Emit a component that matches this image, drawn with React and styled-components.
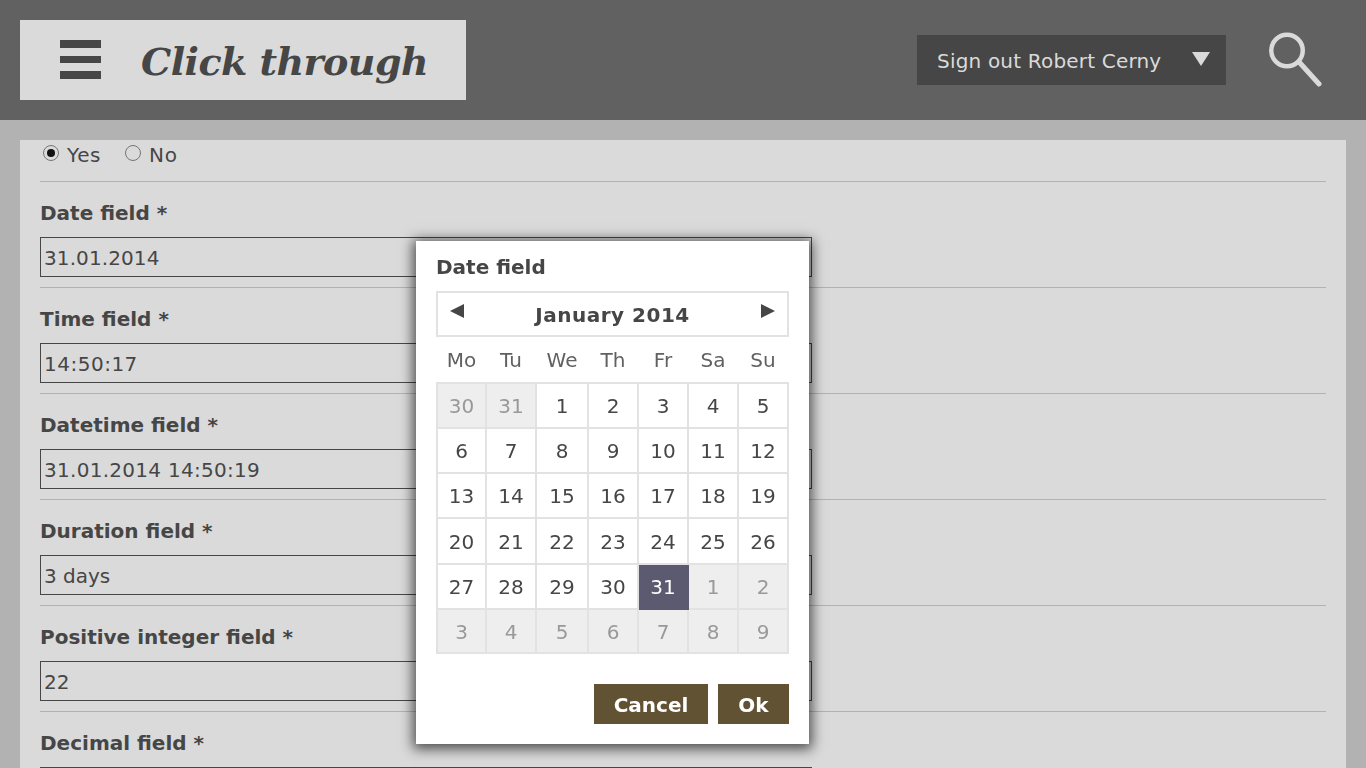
import React from "react";
import styled, { createGlobalStyle } from "styled-components";

const Global = createGlobalStyle`
  html, body { margin: 0; padding: 0; height: 100%; overflow: hidden; }
  body { background: #b2b2b2; font-family: "DejaVu Sans", Verdana, sans-serif; font-size: 20px; color: #464646; }
`;

const Header = styled.header`
  height: 120px; background: #616161; display: flex; align-items: center;
  padding: 0 44px 0 20px; box-sizing: border-box;
`;
const Brand = styled.div`
  width: 446px; height: 80px; background: #dadada; display: flex; align-items: center;
  padding-left: 40px; box-sizing: border-box; gap: 40px;
`;
const Burger = styled.div`
  width: 41px; display: flex; flex-direction: column; gap: 8px; margin-bottom: 1px;
  span { display: block; height: 7.67px; background: #464646; }
`;
const Title = styled.h1`
  margin: 0; padding-top: 4px; font: italic bold 38px/1 "DejaVu Serif", Georgia, serif; color: #464646; letter-spacing: -0.55px; white-space: nowrap;
`;
const Spacer = styled.div` flex: 1; `;
const UserMenu = styled.button`
  width: 309px; height: 50px; background: #464646; color: #dadada; border: 0; display: flex; align-items: center;
  justify-content: space-between; padding: 1px 16px 0 20px; box-sizing: border-box; font: 20px "DejaVu Sans", sans-serif;
  letter-spacing: 0.19px;
`;
const Caret = styled.span`
  width: 0; height: 0; border-left: 9.5px solid transparent; border-right: 9.5px solid transparent;
  border-top: 14px solid #dadada; margin-bottom: 3px;
`;
const SearchIcon = styled.svg` margin-left: 42px; display: block; `;

const Panel = styled.main`
  margin: 20px 20px 0; background: #dadada; padding: 0 20px;
`;
const RadioRow = styled.div`
  height: 42px; box-sizing: border-box; border-bottom: 1px solid #b2b2b2; display: flex; padding: 5px 0 0 3px;
`;
const RadioLabel = styled.label`
  display: flex; align-items: flex-start; gap: 8px; margin-right: 24px; line-height: 20px; letter-spacing: 0.6px;
`;
const RadioDot = styled.span`
  width: 16px; height: 16px; box-sizing: border-box; border: 1px solid #767676; border-radius: 50%; background: #dadada;
  display: flex; align-items: center; justify-content: center;
  &::after { content: ""; width: 8px; height: 8px; border-radius: 50%; background: ${p => p.$on ? "#111" : "transparent"}; }
`;
const Field = styled.div`
  height: 106px; box-sizing: border-box; border-bottom: 1px solid #b2b2b2; padding-top: 19px;
`;
const FieldLabel = styled.div` font-weight: bold; line-height: 24px; height: 36px; `;
const FieldInput = styled.div`
  width: 772px; height: 40px; box-sizing: border-box; border: 1px solid #464646; padding-left: 3px;
  line-height: 40px; white-space: nowrap; letter-spacing: ${p => p.$track}px;
`;

const Dialog = styled.div`
  position: fixed; left: 416px; top: 241px; width: 393px; height: 503px; box-sizing: border-box;
  background: #fff; padding: 14px 20px 0; box-shadow: 0 2px 12px 3px rgba(0,0,0,.65);
`;
const DialogTitle = styled.div` font-weight: bold; line-height: 25px; height: 36px; `;
const MonthBar = styled.div`
  height: 46px; box-sizing: border-box; border: 2px solid #e2e2e2; display: flex; align-items: center; justify-content: space-between;
  padding: 0 12px; font-weight: bold; letter-spacing: 0.5px;
  span { padding-top: 1px; }
`;
const Arrow = styled.i`
  width: 0; height: 0; border-top: 7px solid transparent; border-bottom: 7px solid transparent;
  ${p => p.$dir === "left" ? "border-right: 14px solid #464646;" : "border-left: 14px solid #464646;"}
  margin-bottom: 6px;
`;
const Cal = styled.table`
  width: 353px; border-collapse: collapse; table-layout: fixed;
`;
const Th = styled.th`
  font-weight: normal; color: #616161; height: 45px; padding: 0; text-align: center;
`;
const Td = styled.td`
  height: ${p => p.$h}px; padding: ${p => p.$pad}px 0 0; text-align: center; border: 2px solid #e2e2e2;
  background: ${p => p.$sel ? "#5b5a70" : p.$off ? "#eeeeee" : "#fff"};
  color: ${p => p.$sel ? "#fff" : p.$off ? "#999" : "#464646"};
  ${p => p.$sel ? "border-right-color: #5b5a70; border-bottom-color: #5b5a70;" : ""}
`;
const Actions = styled.div` display: flex; justify-content: flex-end; gap: 10px; margin-top: 30px; `;
const Btn = styled.button`
  height: 40px; border: 0; background: #605232; color: #fff; font: bold 20px "DejaVu Sans", sans-serif;
  padding: 1px 0 0; width: ${p => p.$w}px;
`;

const days = ["Mo","Tu","We","Th","Fr","Sa","Su"];
const cols = [49,50,52,50,50,50,50];
const rows = [[43,0],[43,0],[43,0],[43,1],[43,0],[41,1]];
const weeks = [
  [[30,1],[31,1],1,2,3,4,5],[6,7,8,9,10,11,12],[13,14,15,16,17,18,19],[20,21,22,23,24,25,26],
  [27,28,29,30,[31,2],[1,1],[2,1]],[[3,1],[4,1],[5,1],[6,1],[7,1],[8,1],[9,1]],
];
const fields = [["Date field *","31.01.2014",0.1],["Time field *","14:50:17",0.5],["Datetime field *","31.01.2014 14:50:19",0.28],["Duration field *","3 days",0],["Positive integer field *","22",0],["Decimal field *","",0]];

export default function App() {
  return (
    <>
      <Global />
      <Header>
        <Brand>
          <Burger><span /><span /><span /></Burger>
          <Title>Click through</Title>
        </Brand>
        <Spacer />
        <UserMenu>Sign out Robert Cerny<Caret /></UserMenu>
        <SearchIcon width="54" height="56" viewBox="0 0 54 56" fill="none" stroke="#dadada" strokeWidth="4.5" strokeLinecap="round">
          <circle cx="19" cy="18.5" r="15.75" />
          <path d="M32 31 L51 52" strokeWidth="5" />
        </SearchIcon>
      </Header>
      <Panel>
        <RadioRow>
          <RadioLabel><RadioDot $on />Yes</RadioLabel>
          <RadioLabel><RadioDot />No</RadioLabel>
        </RadioRow>
        {fields.map(([l, v, t]) => (
          <Field key={l}><FieldLabel>{l}</FieldLabel><FieldInput $track={t}>{v}</FieldInput></Field>
        ))}
      </Panel>
      <Dialog>
        <DialogTitle>Date field</DialogTitle>
        <MonthBar><Arrow $dir="left" /><span>January 2014</span><Arrow $dir="right" /></MonthBar>
        <Cal>
          <colgroup>{cols.map((c, i) => <col key={i} width={c} />)}</colgroup>
          <thead><tr>{days.map(d => <Th key={d}>{d}</Th>)}</tr></thead>
          <tbody>
            {weeks.map((w, i) => (
              <tr key={i}>
                {w.map((c, j) => Array.isArray(c)
                  ? <Td key={j} $h={rows[i][0]} $pad={rows[i][1]} $off={c[1] === 1} $sel={c[1] === 2}>{c[0]}</Td>
                  : <Td key={j} $h={rows[i][0]} $pad={rows[i][1]}>{c}</Td>)}
              </tr>
            ))}
          </tbody>
        </Cal>
        <Actions><Btn $w={114}>Cancel</Btn><Btn $w={71}>Ok</Btn></Actions>
      </Dialog>
    </>
  );
}
